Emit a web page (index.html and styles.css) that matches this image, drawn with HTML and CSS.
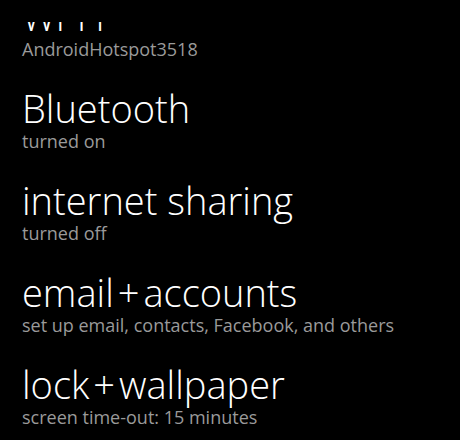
FILE: index.html
```html
<!DOCTYPE html>
<html>
<head>
<meta charset="utf-8">
<link rel="stylesheet" href="styles.css">
</head>
<body>
<div class="viewport">
  <ul class="list">
    <li class="item"><div class="title">Wi-Fi</div><div class="sub">AndroidHotspot3518</div></li>
    <li class="item"><div class="title">Bluetooth</div><div class="sub">turned on</div></li>
    <li class="item"><div class="title">internet sharing</div><div class="sub">turned off</div></li>
    <li class="item"><div class="title">email<span class="plus">+</span>accounts</div><div class="sub">set up email, contacts, Facebook, and others</div></li>
    <li class="item"><div class="title">lock<span class="plus">+</span>wallpaper</div><div class="sub">screen time-out: 15 minutes</div></li>
  </ul>
</div>
</body>
</html>
```
FILE: styles.css
```css
html, body {
  margin: 0;
  padding: 0;
  background: #000;
  width: 460px;
  height: 440px;
  overflow: hidden;
}
.viewport {
  margin-top: 22px;
  height: 418px;
  overflow: hidden;
}
.list {
  list-style: none;
  margin: -26px 0 0 0;
  padding: 0 0 0 22px;
  display: flex;
  flex-direction: column;
}
.item {
  height: 92px;
  flex: none;
  display: flex;
  flex-direction: column;
}
.title {
  font-family: "Open Sans", sans-serif;
  font-weight: 300;
  font-size: 38px;
  line-height: 40px;
  color: #fff;
  white-space: nowrap;
}
.plus {
  margin: 0 4px;
}
.sub {
  font-family: "Open Sans", sans-serif;
  font-size: 18px;
  line-height: 26px;
  color: #9a9a9a;
  white-space: nowrap;
}
```
